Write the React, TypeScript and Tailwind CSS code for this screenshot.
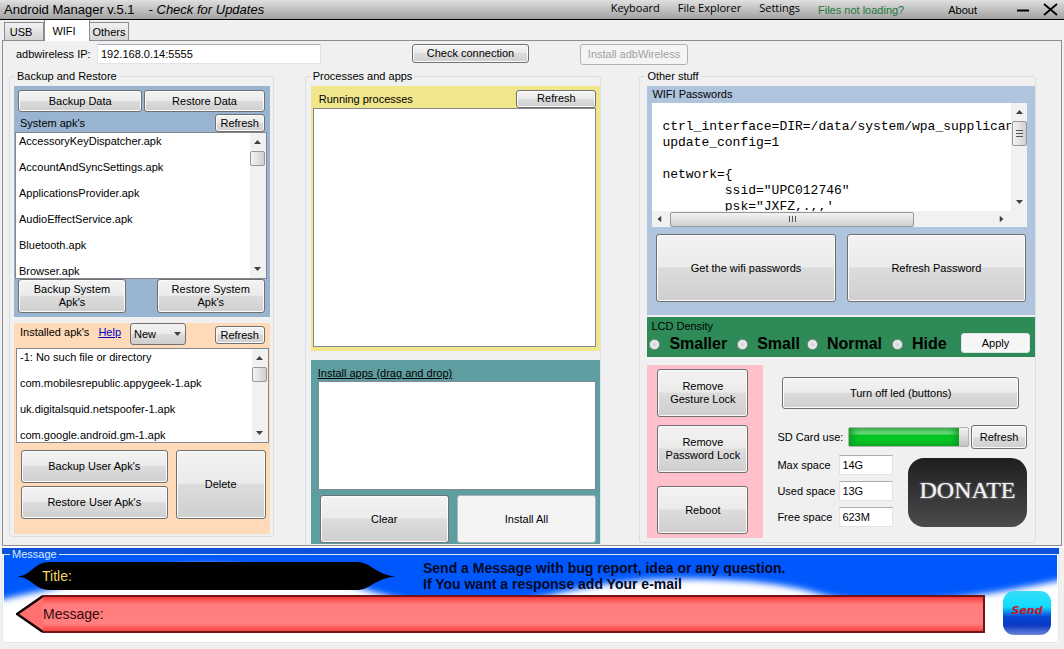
import type { ButtonHTMLAttributes, ReactNode } from "react";
import clsx from "clsx";

const systemApks = [
  "AccessoryKeyDispatcher.apk",
  "AccountAndSyncSettings.apk",
  "ApplicationsProvider.apk",
  "AudioEffectService.apk",
  "Bluetooth.apk",
  "Browser.apk",
];

const userApks = [
  "-1: No such file or directory",
  "com.mobilesrepublic.appygeek-1.apk",
  "uk.digitalsquid.netspoofer-1.apk",
  "com.google.android.gm-1.apk",
];

const wifiConfig = `
ctrl_interface=DIR=/data/system/wpa_supplicant
update_config=1

network={
\tssid="UPC012746"
\tpsk="JXFZ,.,,'`;

const densities = [
  ["Smaller", "mr-[10px]"],
  ["Small", "mr-[7px]"],
  ["Normal", "mr-[10px]"],
  ["Hide", ""],
] as const;

const storage = [
  ["Max space", "14G"],
  ["Used space", "13G"],
  ["Free space", "623M"],
] as const;

function Button({ className, ...props }: ButtonHTMLAttributes<HTMLButtonElement>) {
  return (
    <button
      type="button"
      className={clsx(
        "rounded-[3px] border text-center leading-[13px]",
        props.disabled
          ? "border-[#adb2b5] bg-[#f4f4f4]"
          : "border-[#707070] bg-[linear-gradient(#f3f3f3,#ebebeb_48%,#dcdcdc_50%,#cfcfcf)] shadow-[inset_0_0_0_1px_#fbfbfb]",
        className,
      )}
      {...props}
    />
  );
}

function Group({ title, className, children }: { title: string; className?: string; children: ReactNode }) {
  return (
    <fieldset className={clsx("min-w-0 rounded-[3px] border border-[#d5dfe5]", className)}>
      <legend className="ml-[5px] px-[2px] leading-[14px]">{title}</legend>
      {children}
    </fieldset>
  );
}

function Arrow({ className }: { className?: string }) {
  return (
    <svg viewBox="0 0 7 4" className={clsx("h-1 w-[7px] shrink-0", className)} aria-hidden="true">
      <path d="M0 4 3.500 0 7 4Z" fill="#404040" />
    </svg>
  );
}

function VScroll({ grip }: { grip?: boolean }) {
  return (
    <div className="flex w-4 shrink-0 flex-col items-center bg-[#f1f1f1] py-[7px]" aria-hidden="true">
      <Arrow />
      <div
        className={clsx(
          "mt-[7px] flex w-[15px] flex-col items-center justify-center gap-[2px] rounded-[2px] border border-[#979797] bg-linear-to-r from-[#f5f5f5] to-[#cfcfcf]",
          grip ? "h-[25px]" : "h-[15px]",
        )}
      >
        {grip && [0, 1, 2].map((i) => <span key={i} className="h-px w-[7px] bg-[#555]" />)}
      </div>
      <Arrow className="mt-auto rotate-180" />
    </div>
  );
}

function ApkList({ items, label, className }: { items: string[]; label: string; className?: string }) {
  return (
    <div className={clsx("flex overflow-hidden border border-[#828790] bg-white", className)}>
      <ul aria-label={label} className="min-w-0 flex-1 pl-[3px]">
        {items.map((item) => (
          <li key={item} className="h-[26px] leading-[16px] whitespace-nowrap">
            {item}
          </li>
        ))}
      </ul>
      <VScroll />
    </div>
  );
}

function TitleBar() {
  return (
    <header className="flex h-5 items-center border-b border-black bg-linear-to-b from-[#e0e0e0] to-[#a2a2a2] pr-[6px] pl-1">
      <h1 className="text-[13px] leading-[18px]">Android Manager v.5.1</h1>
      <a href="#updates" className="ml-[14px] text-[13px] leading-[18px] italic">
        - Check for Updates
      </a>
      <nav className="ml-auto flex items-center">
        <div className="mb-1 flex gap-[18px] font-['Open_Sans',sans-serif]">
          <a href="#keyboard">Keyboard</a>
          <a href="#explorer">File Explorer</a>
          <a href="#settings">Settings</a>
        </div>
        <a href="#loading" className="ml-[18px] text-[#1d7a3a]">
          Files not loading?
        </a>
        <a href="#about" className="ml-11">
          About
        </a>
      </nav>
      <button type="button" aria-label="Minimize" className="ml-10">
        <svg viewBox="0 0 12 14" className="h-[14px] w-3">
          <path d="M0 7.500h12" stroke="#000" strokeWidth="2" />
        </svg>
      </button>
      <button type="button" aria-label="Close" className="ml-[14px]">
        <svg viewBox="0 0 15 13" className="h-[13px] w-[15px]">
          <path d="M1 1 14 12M14 1 1 12" stroke="#000" strokeWidth="1.800" />
        </svg>
      </button>
    </header>
  );
}

function BackupGroup() {
  return (
    <Group title="Backup and Restore" className="mr-[31px] self-start">
      <div className="flex flex-col gap-[6px] pt-[3px] pr-[3px] pb-[2px] pl-1">
        <section className="bg-[#99b4d1] pt-1 pb-1">
          <div className="flex gap-[2px] pr-[5px] pl-1">
            <Button className="h-[22px] flex-[124]">Backup Data</Button>
            <Button className="h-[22px] flex-[120]">Restore Data</Button>
          </div>
          <div className="mt-[2px] flex items-center justify-between pr-[5px] pl-[6px]">
            <span>System apk's</span>
            <Button className="h-[18px] w-[50px]">Refresh</Button>
          </div>
          <ApkList items={systemApks} label="System apk's" className="mr-[3px] ml-px h-[147px]" />
          <div className="flex justify-between pr-[5px] pl-1">
            <Button className="h-[34px] w-[108px] px-3">Backup System Apk's</Button>
            <Button className="h-[34px] w-[108px] px-3">Restore System Apk's</Button>
          </div>
        </section>
        <section className="bg-[#ffdab9] pb-[15px]">
          <div className="flex h-[25px] items-start pr-[5px] pl-[6px]">
            <span className="leading-[18px]">Installed apk's</span>
            <a href="#help" className="ml-[9px] leading-[18px] text-[#0000c8] underline">
              Help
            </a>
            <span className="relative ml-[9px]">
              <select
                aria-label="Installed apk filter"
                className="block h-[22px] w-14 appearance-none rounded-[3px] border border-[#707070] bg-[linear-gradient(#f3f3f3,#ebebeb_48%,#dcdcdc_50%,#cfcfcf)] pl-[3px]"
              >
                <option>New</option>
              </select>
              <Arrow className="pointer-events-none absolute top-[9px] right-[5px] rotate-180" />
            </span>
            <Button className="mt-[3px] ml-auto h-[18px] w-[50px]">Refresh</Button>
          </div>
          <ApkList items={userApks} label="Installed apk's" className="mr-px ml-[2px] h-[95px]" />
          <div className="mt-[7px] flex gap-2 pr-1 pl-[7px]">
            <div className="flex flex-[148] flex-col gap-[3px]">
              <Button className="h-[33px]">Backup User Apk's</Button>
              <Button className="h-[33px]">Restore User Apk's</Button>
            </div>
            <Button className="flex-[89]">Delete</Button>
          </div>
        </section>
      </div>
    </Group>
  );
}

function ProcessGroup() {
  return (
    <Group title="Processes and apps" className="mr-[38px] rounded-b-none border-b-0">
      <div className="flex flex-col gap-[9px] pt-[3px] pb-px pl-[5px]">
        <section className="bg-[#f0e68c] pt-[3px] pr-1 pb-1 pl-[2px]">
          <div className="flex h-[19px] items-center justify-between pl-[6px]">
            <span>Running processes</span>
            <Button className="h-[18px] w-20">Refresh</Button>
          </div>
          <div className="h-[239px] border border-[#828790] bg-white" />
        </section>
        <section className="bg-[#5f9ea0] pt-[5px] pr-1 pb-px pl-[7px]">
          <h2 className="leading-[16px] underline">Install apps (drag and drop)</h2>
          <div className="h-[109px] border border-[#828790] bg-white" />
          <div className="mt-[5px] flex gap-2 pl-[2px]">
            <Button className="h-12 flex-[129]">Clear</Button>
            <Button disabled className="h-12 flex-[140]">
              Install All
            </Button>
          </div>
        </section>
      </div>
    </Group>
  );
}

function WifiPasswords() {
  return (
    <section className="bg-[#b0c4de] pr-2 pb-[13px] pl-[5px]">
      <label htmlFor="wifi" className="block h-[17px] leading-[16px]">
        WIFI Passwords
      </label>
      <div className="flex h-[108px] bg-white">
        <textarea
          id="wifi"
          readOnly
          wrap="off"
          value={wifiConfig}
          className="min-w-0 flex-1 resize-none overflow-hidden pl-[10px] font-['Liberation_Mono',monospace] text-[13px] leading-[16px] whitespace-pre outline-none [tab-size:8]"
        />
        <VScroll grip />
      </div>
      <div className="flex h-4 items-center bg-[#f1f1f1] pr-[22px] pl-1" aria-hidden="true">
        <Arrow className="-rotate-90" />
        <div className="ml-[7px] flex h-[15px] w-[70%] items-center justify-center gap-[2px] rounded-[2px] border border-[#979797] bg-linear-to-b from-[#f3f3f3] to-[#cfcfcf]">
          {[0, 1, 2].map((i) => (
            <span key={i} className="h-[6px] w-px bg-[#555]" />
          ))}
        </div>
        <Arrow className="ml-auto rotate-90" />
      </div>
      <div className="mt-[7px] flex gap-[11px] pr-px pl-1">
        <Button className="h-[68px] flex-1">Get the wifi passwords</Button>
        <Button className="h-[68px] flex-1">Refresh Password</Button>
      </div>
    </section>
  );
}

function OtherGroup() {
  return (
    <Group title="Other stuff" className="self-start">
      <div className="pt-[3px] pb-1 pl-[7px]">
        <WifiPasswords />
        <section className="mt-[2px] flex h-10 bg-[#2e8b57] pr-[5px] pl-[2px]">
          <fieldset className="min-w-0 flex-1">
            <legend className="ml-[2px] h-[17px] leading-[18px]">LCD Density</legend>
            <div className="flex items-center">
              {densities.map(([name, gap]) => (
                <label key={name} className={clsx("flex items-center gap-[9px] text-[16px] leading-[20px] font-bold", gap)}>
                  <input
                    type="radio"
                    name="density"
                    className="size-[11px] appearance-none rounded-full border border-[#8e8f8f] bg-[radial-gradient(#cdd2d6,#f4f4f4_75%)]"
                  />
                  {name}
                </label>
              ))}
            </div>
          </fieldset>
          <Button className="mt-4 h-5 w-[69px] border-[#d8e4dc]! bg-[#f6f6f6] bg-none!">Apply</Button>
        </section>
        <div className="mt-2 flex">
          <section className="flex w-[116px] shrink-0 flex-col bg-[#ffc0cb] pt-1 pr-[15px] pb-1 pl-[10px]">
            <Button className="h-12 px-2">Remove Gesture Lock</Button>
            <Button className="mt-2 h-12 px-1">Remove Password Lock</Button>
            <Button className="mt-[13px] h-12">Reboot</Button>
          </section>
          <section className="flex flex-1 flex-col pt-3 pr-2 pl-[14px]">
            <Button className="mr-2 ml-[5px] h-8">Turn off led (buttons)</Button>
            <div className="mt-4 flex items-center gap-[2px]">
              <span className="w-[69px] whitespace-nowrap">SD Card use:</span>
              <div
                role="progressbar"
                aria-label="SD Card use"
                aria-valuenow={92}
                className="h-5 flex-1 rounded-[2px] border border-[#b2b2b2] bg-linear-to-b from-[#f2f2f2] to-[#c4c4c4]"
              >
                <div
                  className="h-full bg-[linear-gradient(#a5f0ae,#6fe47d_35%,#05c622_38%,#0ad42c)] shadow-[inset_3px_0_8px_#0a9a20,inset_-3px_0_8px_#0a9a20]"
                  style={{ width: "92%" }}
                />
              </div>
              <Button className="h-6 w-14">Refresh</Button>
            </div>
            <div className="mt-[6px] flex justify-between">
              <div className="flex flex-col gap-[6px]">
                {storage.map(([name, value]) => (
                  <label key={name} className="flex items-center">
                    <span className="w-[62px] whitespace-nowrap">{name}</span>
                    <input
                      readOnly
                      value={value}
                      className="h-5 w-[54px] border border-[#e2e3ea] border-t-[#abadb3] bg-white pl-[2px]"
                    />
                  </label>
                ))}
              </div>
              <button
                type="button"
                className="mt-[3px] h-[69px] w-[119px] rounded-[16px] bg-linear-to-b from-[#1e1e20] to-[#4c4c4e] pb-[6px] font-['Liberation_Serif',serif] text-[24px] text-[#f2f2f2] [text-shadow:0_0_2px_#bbb]"
              >
                DONATE
              </button>
            </div>
          </section>
        </div>
      </div>
    </Group>
  );
}

function MessageBox() {
  return (
    <section className="relative mr-[5px] ml-[2px] h-[95px] bg-white">
      {/* blue sky with soft white hills rising from the bottom */}
      <svg viewBox="0 0 1057 95" preserveAspectRatio="none" className="absolute inset-0 h-full w-full" aria-hidden="true">
        <defs>
          <filter id="soft" x="-5%" y="-20%" width="110%" height="140%">
            <feGaussianBlur stdDeviation="3" />
          </filter>
          <clipPath id="inner">
            <path d="M2 0H1055V93H2Z" />
          </clipPath>
        </defs>
        <g clipPath="url(#inner)">
          <path
            d="M-20-20H1080V28C1040 36 1000 44 960 49C920 54 860 56 825 48C790 36 740 31 680 31C610 31 570 42 520 54H420C370 50 330 20 205 17C120 18 70 38 30 45C10 49 0 52-20 56Z"
            fill="#0558fc"
            filter="url(#soft)"
          />
        </g>
        <path d="M0 0H1057V6H0Z" fill="#0a52dc" />
      </svg>
      <fieldset className="relative flex h-[95px] min-w-0 flex-col rounded-[3px] border border-[#dbe9f0]">
        <legend className="ml-[7px] h-3 px-[2px] leading-[12px] text-[#dcecff]">Message</legend>
        <div className="flex pl-[14px]">
          <label className="relative mt-px flex h-[30px] w-[378px] items-center pl-[25px] text-[14px] text-[#f0d860]">
            <svg viewBox="0 0 378 30" className="absolute inset-0 h-full w-full" aria-hidden="true">
              <path
                d="M0 15.500L6 14.500C16 10 20 1 32 1H340C352 1 356 10 372 14.500L378 15.500L372 16.500C356 20 352 29 340 29H32C20 29 16 20 6 16.500Z"
                fill="#000"
              />
            </svg>
            <span className="relative">Title:</span>
            <input className="relative ml-2 min-w-0 flex-1 bg-transparent outline-none" />
            <span className="w-7" />
          </label>
          <p className="ml-7 text-[14px] leading-[16px] font-bold text-[#020824]">
            Send a Message with bug report, idea or any question.
            <br />
            If You want a response add Your e-mail
          </p>
        </div>
        <div className="mt-[3px] flex items-start pr-[7px] pl-[13px]">
          <label className="flex h-[38px] flex-1">
            <svg viewBox="0 0 27 38" className="h-[38px] w-[27px] shrink-0" aria-hidden="true">
              <path d="M27 1 1 19 27 37Z" fill="#ff7070" />
              <path d="M27 1 1 19 27 37" fill="none" stroke="#100404" strokeWidth="2.500" />
            </svg>
            <span className="flex flex-1 items-center border-y-2 border-r-2 border-[#701418] bg-[linear-gradient(#f83c3c,#ff7c7c_22%,#ff8080_78%,#f84040)] text-[14px] text-[#38080c]">
              Message:
              <input className="ml-2 min-w-0 flex-1 bg-transparent outline-none" />
            </span>
          </label>
          <button
            type="button"
            className="-mt-1 ml-[18px] h-11 w-12 rounded-[11px] bg-[linear-gradient(#38dcf8,#10dcff_36%,#0848d8_58%,#0a38c4_78%,#6c88dc)] pb-1 font-['DejaVu_Sans',sans-serif] text-[11px] font-bold text-[#c41828] italic"
          >
            Send
          </button>
        </div>
      </fieldset>
    </section>
  );
}

export default function App() {
  return (
    <div className="flex min-h-screen flex-col bg-[#f0f0f0] font-['Liberation_Sans',Arial,sans-serif] text-[11px] leading-[14px] text-black">
      <TitleBar />
      <div role="tablist" className="flex h-5 items-end pl-1">
        <button type="button" role="tab" className="h-[18px] w-10 border border-b-0 border-[#898c95] bg-linear-to-b from-[#f2f2f2] to-[#d4d4d4] pr-[6px]">
          USB
        </button>
        <button type="button" role="tab" aria-selected="true" className="relative -mb-px h-[21px] w-[46px] border border-y-0 border-[#898c95] bg-white pr-[6px]">
          WIFI
        </button>
        <button type="button" role="tab" className="h-[18px] w-[39px] border border-b-0 border-l-0 border-[#898c95] bg-linear-to-b from-[#f2f2f2] to-[#d4d4d4]">
          Others
        </button>
      </div>
      <main className="mx-[2px] border border-[#898c95]">
        <div className="flex h-[28px] items-start pt-[3px] pl-[13px]">
          <label htmlFor="ip" className="w-[81px] leading-[20px]">
            adbwireless IP:
          </label>
          <input
            id="ip"
            defaultValue="192.168.0.14:5555"
            className="h-5 w-56 border border-[#e2e3ea] border-t-[#abadb3] bg-white pl-[3px]"
          />
          <Button className="ml-[91px] h-[19px] w-[117px]">Check connection</Button>
          <Button disabled className="ml-[51px] h-[21px] w-[108px] text-[#a0a0a0]">
            Install adbWireless
          </Button>
        </div>
        <div className="grid grid-cols-[296fr_335fr_397fr] pr-[25px] pl-[6px]">
          <BackupGroup />
          <ProcessGroup />
          <OtherGroup />
        </div>
      </main>
      <div className="h-[2px] bg-white" />
      <MessageBox />
    </div>
  );
}
